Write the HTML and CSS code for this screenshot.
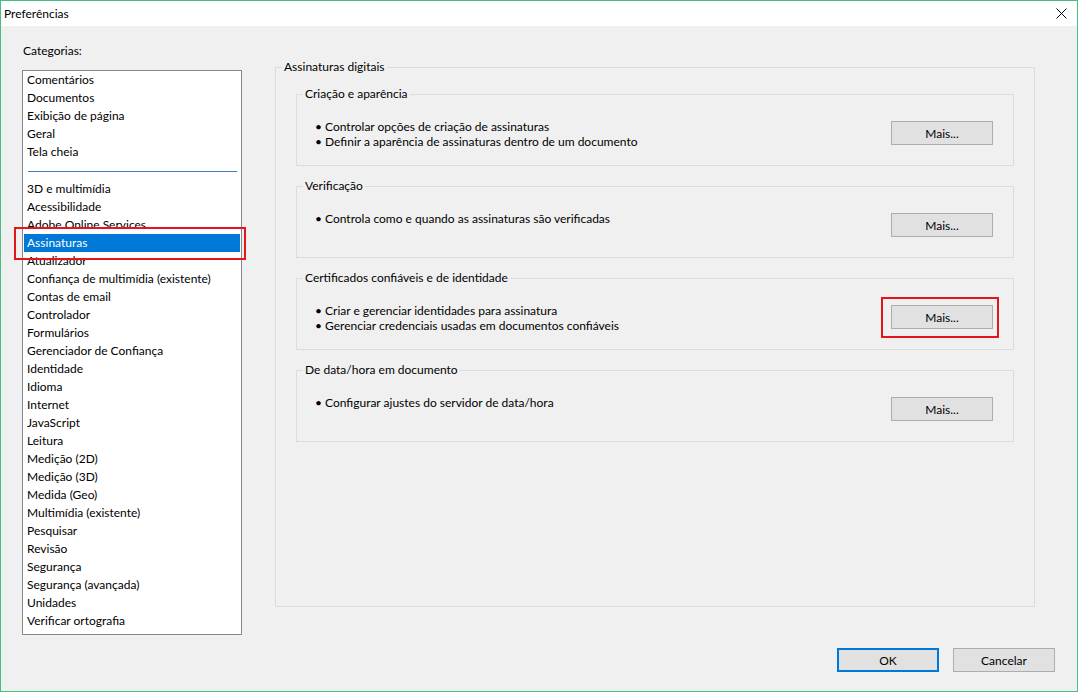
FILE: index.html
```html
<!DOCTYPE html>
<html lang="pt-BR">
<head>
    <meta charset="UTF-8">
    <title>Preferências</title>
    <link rel="stylesheet" href="styles.css">
</head>
<body>
    <div class="window">
        <div class="titlebar">
            <span class="title">Preferências</span>
            <span class="close">
                <svg width="11" height="11" viewBox="0 0 11 11"><path d="M0.5 0.5L10.5 10.5M10.5 0.5L0.5 10.5" stroke="#000" stroke-width="1"/></svg>
            </span>
        </div>
        <div class="dialog-body">
            <div class="main">
                <div class="categories">
                    <div class="categories-label">Categorias:</div>
                    <div class="list">
                        <div class="item">Comentários</div>
                        <div class="item">Documentos</div>
                        <div class="item">Exibição de página</div>
                        <div class="item">Geral</div>
                        <div class="item">Tela cheia</div>
                        <div class="separator"></div>
                        <div class="item">3D e multimídia</div>
                        <div class="item">Acessibilidade</div>
                        <div class="item">Adobe Online Services</div>
                        <div class="item selected">Assinaturas</div>
                        <div class="item">Atualizador</div>
                        <div class="item">Confiança de multimídia (existente)</div>
                        <div class="item">Contas de email</div>
                        <div class="item">Controlador</div>
                        <div class="item">Formulários</div>
                        <div class="item">Gerenciador de Confiança</div>
                        <div class="item">Identidade</div>
                        <div class="item">Idioma</div>
                        <div class="item">Internet</div>
                        <div class="item">JavaScript</div>
                        <div class="item">Leitura</div>
                        <div class="item">Medição (2D)</div>
                        <div class="item">Medição (3D)</div>
                        <div class="item">Medida (Geo)</div>
                        <div class="item">Multimídia (existente)</div>
                        <div class="item">Pesquisar</div>
                        <div class="item">Revisão</div>
                        <div class="item">Segurança</div>
                        <div class="item">Segurança (avançada)</div>
                        <div class="item">Unidades</div>
                        <div class="item">Verificar ortografia</div>
                        <div class="highlight highlight-item"></div>
                    </div>
                </div>

                <fieldset class="group outer">
                    <legend>Assinaturas digitais</legend>

                    <fieldset class="group inner">
                        <legend>Criação e aparência</legend>
                        <div class="group-row">
                            <div class="bullets">
                                <div>• Controlar opções de criação de assinaturas</div>
                                <div>• Definir a aparência de assinaturas dentro de um documento</div>
                            </div>
                            <div class="btn-wrap"><button class="btn">Mais...</button></div>
                        </div>
                    </fieldset>

                    <fieldset class="group inner">
                        <legend>Verificação</legend>
                        <div class="group-row">
                            <div class="bullets">
                                <div>• Controla como e quando as assinaturas são verificadas</div>
                            </div>
                            <div class="btn-wrap"><button class="btn">Mais...</button></div>
                        </div>
                    </fieldset>

                    <fieldset class="group inner">
                        <legend>Certificados confiáveis e de identidade</legend>
                        <div class="group-row">
                            <div class="bullets">
                                <div>• Criar e gerenciar identidades para assinatura</div>
                                <div>• Gerenciar credenciais usadas em documentos confiáveis</div>
                            </div>
                            <div class="btn-wrap">
                                <button class="btn">Mais...</button>
                                <div class="highlight highlight-btn"></div>
                            </div>
                        </div>
                    </fieldset>

                    <fieldset class="group inner">
                        <legend>De data/hora em documento</legend>
                        <div class="group-row">
                            <div class="bullets">
                                <div>• Configurar ajustes do servidor de data/hora</div>
                            </div>
                            <div class="btn-wrap"><button class="btn">Mais...</button></div>
                        </div>
                    </fieldset>
                </fieldset>
            </div>

            <div class="footer">
                <button class="btn btn-default">OK</button>
                <button class="btn">Cancelar</button>
            </div>
        </div>
    </div>
</body>
</html>
```

FILE: styles.css
```css
:root {
    --win-border: #47bf83;
    --dialog-bg: #f0f0f0;
    --group-border: #dcdcdc;
    --select-bg: #0078d7;
    --mark-red: #e3151d;
}

* {
    box-sizing: border-box;
    margin: 0;
    padding: 0;
}

body {
    font-family: Lato, "Noto Sans", sans-serif;
    font-size: 12px;
    color: #000;
    background: var(--dialog-bg);
}

.window {
    width: 1078px;
    height: 692px;
    border: 1px solid var(--win-border);
    display: flex;
    flex-direction: column;
}

.titlebar {
    height: 25px;
    background: #fff;
    display: flex;
    align-items: center;
    justify-content: space-between;
    padding: 0 10px 0 3px;
}

.title {
    font-size: 12px;
}

.close {
    display: flex;
    align-items: center;
}

.dialog-body {
    flex: 1;
    background: var(--dialog-bg);
    padding: 17px 22px 19px 21px;
    display: flex;
    flex-direction: column;
}

.main {
    display: flex;
    gap: 33px;
}

/* lista de categorias */
.categories {
    width: 220px;
}

.categories-label {
    line-height: 16px;
    padding-left: 1px;
    margin-bottom: 11px;
}

.list {
    position: relative;
    height: 565px;
    background: #fff;
    border: 1px solid #828790;
}

.item {
    height: 18px;
    line-height: 18px;
    margin: 0 1px;
    padding-left: 3px;
    white-space: nowrap;
}

.item.selected {
    background: var(--select-bg);
    color: #fff;
}

.separator {
    height: 19px;
    margin: 0 4px 0 5px;
    padding-top: 10px;
}

.separator::after {
    content: "";
    display: block;
    height: 1px;
    background: #3b7fc0;
}

/* caixas de grupo */
.group {
    border: 1px solid var(--group-border);
}

.group legend {
    padding: 0 2px;
    line-height: 16px;
}

.outer {
    width: 760px;
    height: 548px;
    margin-top: 16px;
    padding: 11px 20px 0 20px;
}

.outer > legend {
    margin-left: -14px;
}

.inner {
    height: 80px;
    margin-bottom: 12px;
    padding: 17px 20px 16px 18px;
}

.inner > legend {
    margin-left: -12px;
}

.group-row {
    display: flex;
    justify-content: space-between;
    align-items: flex-start;
    min-height: 30px;
}

.bullets {
    line-height: 15px;
}

.btn-wrap {
    position: relative;
    margin-top: 2px;
}

.btn {
    width: 102px;
    height: 24px;
    font-family: inherit;
    font-size: 12px;
    color: #000;
    background: #e1e1e1;
    border: 1px solid #adadad;
}

.footer {
    margin-top: 13px;
    display: flex;
    justify-content: flex-end;
    gap: 14px;
}

.btn-default {
    border: 2px solid var(--select-bg);
}

/* marcações vermelhas */
.highlight {
    position: absolute;
    border: 2px solid var(--mark-red);
}

.highlight-item {
    left: -9px;
    top: 156px;
    width: 232px;
    height: 33px;
}

.highlight-btn {
    left: -10px;
    top: -8px;
    width: 118px;
    height: 41px;
}
```
